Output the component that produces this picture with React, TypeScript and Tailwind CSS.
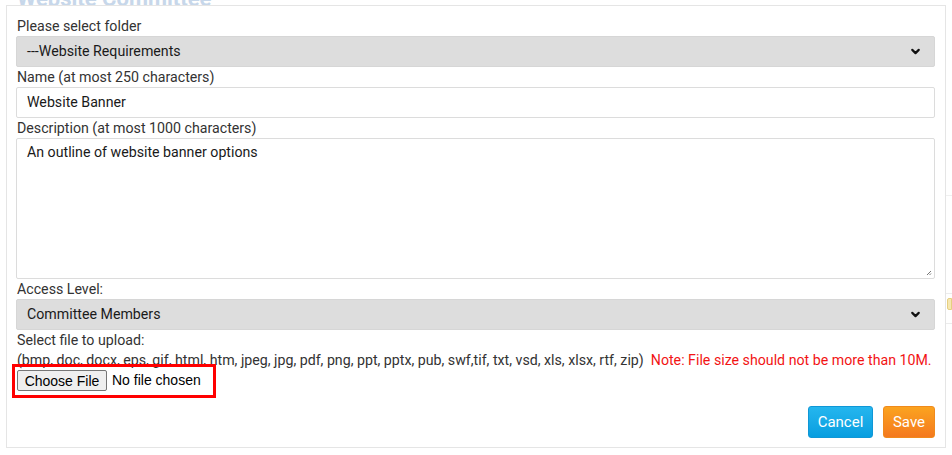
import { ChevronDown } from 'lucide-react';

const font = { fontFamily: 'Roboto, "Liberation Sans", Arial, sans-serif' };

function Label({ children }: { children: React.ReactNode }) {
  return <div className="h-[20px] leading-[20px] text-[14.2px] text-[#333] pl-px">{children}</div>;
}

function FakeSelect({ value }: { value: string }) {
  return (
    <div className="h-[31px] flex items-center justify-between rounded-[2px] border border-[#d6d6d6] bg-[#dddddd] pl-[10px] pr-[12px] text-[14.2px] text-[#1a1a1a]">
      <span>{value}</span>
      <ChevronDown size={13} strokeWidth={4} className="text-[#111]" />
    </div>
  );
}

export default function App() {
  return (
    <div className="relative w-[952px] h-[455px] overflow-hidden bg-white" style={font}>
      {/* page behind the dialog */}
      <div className="absolute left-[17px] top-[-18px] text-[22px] font-bold text-[#c7d7ea]">Website Committee</div>
      <div className="absolute right-0 top-[293px] w-[8px] border-t border-[#ececec]" />
      <div className="absolute right-0 top-[323px] w-[8px] border-t border-[#ececec]" />
      <div className="absolute right-0 top-[195px] w-[8px] border-t border-[#f0f0f0]" />
      <div className="absolute right-0 top-[298px] w-[5px] h-[12px] rounded-l-[2px] bg-[#f6e7b0] border border-[#e6cf80]" />

      <div className="relative ml-[6px] mt-[5px] w-[940px] h-[443px] border border-[#e5e5e5] bg-white pl-[9px] pr-[10px] pt-[10px] flex flex-col">
        <Label>Please select folder</Label>
        <FakeSelect value="---Website Requirements" />

        <Label>Name (at most 250 characters)</Label>
        <div className="h-[31px] flex items-center rounded-[2px] border border-[#dcdcdc] bg-white pl-[10px] text-[14.2px] text-[#1a1a1a]">
          Website Banner
        </div>

        <Label>Description (at most 1000 characters)</Label>
        <div className="relative h-[141px] rounded-[2px] border border-[#dcdcdc] bg-white pl-[10px] pt-[3px] text-[14.2px] leading-[20px] text-[#1a1a1a]">
          An outline of website banner options
          <svg className="absolute right-[2px] bottom-[2px]" width="6" height="6" viewBox="0 0 6 6">
            <path d="M5 1 L1 5 M5 3.5 L3.5 5" stroke="#777" strokeWidth="1" />
          </svg>
        </div>

        <Label>Access Level:</Label>
        <FakeSelect value="Committee Members" />

        <Label>Select file to upload:</Label>
        <div className="h-[20px] leading-[20px] text-[14.2px] text-[#333] pl-px whitespace-nowrap">
          (bmp, doc, docx, eps, gif, html, htm, jpeg, jpg, pdf, png, ppt, pptx, pub, swf,tif, txt, vsd, xls, xlsx, rtf, zip)
          <span className="ml-[7px] text-[#f21414]">Note: File size should not be more than 10M.</span>
        </div>

        <div className="flex items-center gap-[5px] pl-px text-[14px] text-black" style={{ fontFamily: '"Liberation Sans", Arial, sans-serif' }}>
          <button className="h-[21px] w-[90px] rounded-[2px] border border-[#767676] bg-[#efefef] leading-none">Choose File</button>
          <span>No file chosen</span>
        </div>

        <div className="mt-[15px] flex justify-end gap-[10px]">
          <button className="h-[32px] w-[65px] rounded-[3px] border border-[#0f97d6] bg-gradient-to-b from-[#24b6ee] to-[#069ee0] text-[15px] text-white">
            Cancel
          </button>
          <button className="h-[32px] w-[52px] rounded-[3px] border border-[#f08a1c] bg-gradient-to-b from-[#fba31f] to-[#f4791f] text-[15px] text-white">
            Save
          </button>
        </div>

        {/* annotation box */}
        <div className="absolute left-[5px] top-[358px] w-[204px] h-[34px] border-[3px] border-[#ff0000]" />
      </div>
    </div>
  );
}
